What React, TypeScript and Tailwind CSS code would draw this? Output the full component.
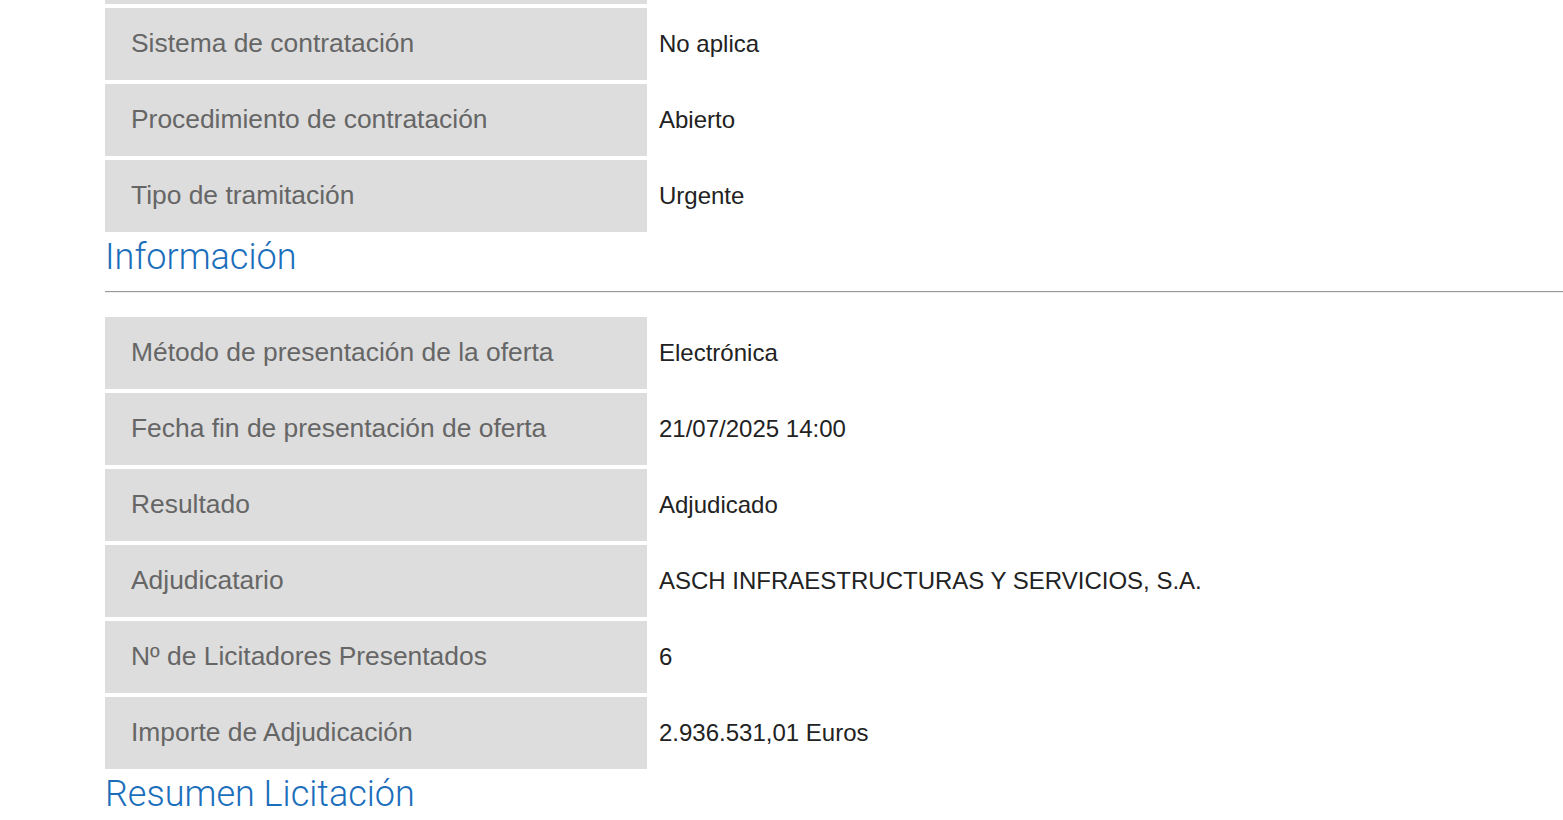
import React from "react";

const rowsTop = [
  ["Sistema de contratación", "No aplica"],
  ["Procedimiento de contratación", "Abierto"],
  ["Tipo de tramitación", "Urgente"],
];

const rowsInfo = [
  ["Método de presentación de la oferta", "Electrónica"],
  ["Fecha fin de presentación de oferta", "21/07/2025 14:00"],
  ["Resultado", "Adjudicado"],
  ["Adjudicatario", "ASCH INFRAESTRUCTURAS Y SERVICIOS, S.A."],
  ["Nº de Licitadores Presentados", "6"],
  ["Importe de Adjudicación", "2.936.531,01 Euros"],
];

function Row({ label, value }: { label: string; value: string }) {
  return (
    <div className="flex mb-[4px]">
      <div className="w-[542px] h-[72px] shrink-0 bg-[#dddddd] flex items-center pl-[26px] text-[26.4px] text-[#666666] font-['Liberation_Sans',Arial,sans-serif]">
        {label}
      </div>
      <div className="flex items-center pl-[12px] text-[24px] text-[#222222] font-['Liberation_Sans',Arial,sans-serif]">
        {value}
      </div>
    </div>
  );
}

function Heading({ children }: { children: React.ReactNode }) {
  return (
    <h2 className="mt-[4px] text-[36px] leading-[42px] text-[#1b6ebb] font-['Roboto',sans-serif] font-light">
      {children}
    </h2>
  );
}

export default function App() {
  return (
    <div className="w-[1563px] h-[820px] overflow-hidden bg-white pl-[105px]">
      <div className="w-[542px] h-[4px] bg-[#dddddd] mb-[4px]" />
      {rowsTop.map(([l, v]) => (
        <Row key={l} label={l} value={v} />
      ))}
      <Heading>Información</Heading>
      <div className="mt-[13px] border-t border-t-[#9a9a9a] border-b border-b-[#eeeeee]" />
      <div className="h-[24px]" />
      {rowsInfo.map(([l, v]) => (
        <Row key={l} label={l} value={v} />
      ))}
      <Heading>Resumen Licitación</Heading>
    </div>
  );
}
